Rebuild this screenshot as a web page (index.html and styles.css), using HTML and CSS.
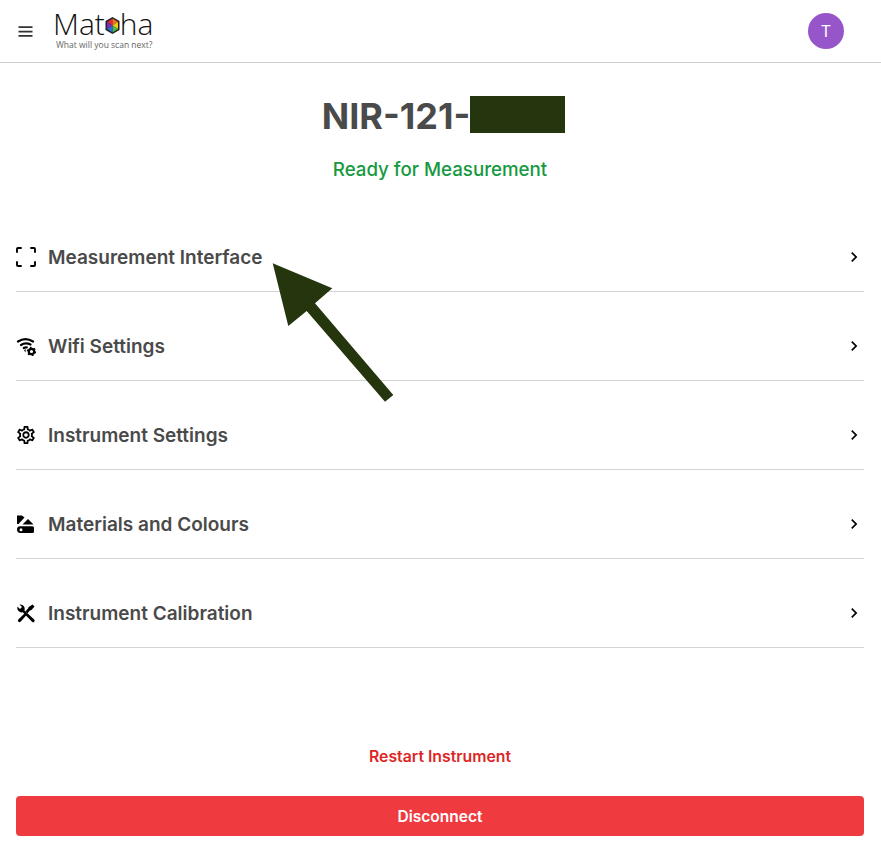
FILE: index.html
```html
<!DOCTYPE html>
<html lang="en">
<head>
  <meta charset="UTF-8">
  <meta name="viewport" content="width=device-width, initial-scale=1.0">
  <title>Matoha Instrument</title>
  <link rel="stylesheet" href="styles.css">
</head>
<body>
  <header class="topbar">
    <div class="topbar-left">
      <button class="menu-btn" aria-label="Menu">
        <svg width="21" height="21" viewBox="0 0 24 24"><path d="M4 18h16v-2H4v2zm0-5h16v-2H4v2zm0-7v2h16V6H4z" fill="#333"/></svg>
      </button>
      <div class="logo">
        <div class="logo-word">
          <span>Mat</span>
          <svg class="logo-hex" width="15" height="17" viewBox="0 0 30 34">
            <polygon points="15,0 29,8 29,26 15,34 1,26 1,8" fill="#222"/>
            <polygon points="15,3 15,17 4,10" fill="#e0263a"/>
            <polygon points="15,3 26,10 15,17" fill="#f0701f"/>
            <polygon points="26,10 26,24 15,17" fill="#f2c818"/>
            <polygon points="26,24 15,31 15,17" fill="#4fb848"/>
            <polygon points="15,31 4,24 15,17" fill="#2a6fd0"/>
            <polygon points="4,24 4,10 15,17" fill="#7a2fb8"/>
          </svg>
          <span>ha</span>
        </div>
        <div class="logo-tag">What will you scan next?</div>
      </div>
    </div>
    <div class="avatar">T</div>
  </header>

  <main class="content">
    <h1 class="device-name">NIR-121-<span class="redacted"></span></h1>
    <p class="status">Ready for Measurement</p>

    <ul class="menu">
      <li class="menu-row">
        <svg class="row-icon" viewBox="0 0 20 20" fill="none" stroke="#000" stroke-width="1.900" stroke-linecap="round" stroke-linejoin="round">
          <path d="M1 5V2a1 1 0 0 1 1-1h3M15 1h3a1 1 0 0 1 1 1v3M19 15v3a1 1 0 0 1-1 1h-3M5 19H2a1 1 0 0 1-1-1v-3"/>
        </svg>
        <span class="row-label">Measurement Interface</span>
        <svg class="chevron" viewBox="0 0 24 24"><path d="M10 6L8.600 7.400 13.200 12l-4.600 4.600L10 18l6-6z"/></svg>
      </li>
      <li class="menu-row">
        <svg class="row-icon" viewBox="0 0 20 20">
          <g fill="none" stroke="#000" stroke-width="2.200" stroke-linecap="round">
            <path d="M2 5.500Q9.500 .8 17 5.500"/>
            <path d="M5 9Q9.500 6 14.500 8.500"/>
            <path d="M7.800 12Q9.300 11.100 10.800 11.400"/>
          </g>
          <path d="M9.600 13L8 14.600l1.600 1.600z"/>
          <circle cx="15.500" cy="15.500" r="2.700" fill="none" stroke="#000" stroke-width="2.200"/>
          <circle cx="15.500" cy="15.500" r="4" fill="none" stroke="#000" stroke-width="1.500" stroke-dasharray="1.700 2.490"/>
        </svg>
        <span class="row-label">Wifi Settings</span>
        <svg class="chevron" viewBox="0 0 24 24"><path d="M10 6L8.600 7.400 13.200 12l-4.600 4.600L10 18l6-6z"/></svg>
      </li>
      <li class="menu-row">
        <svg class="row-icon" viewBox="1 1 22 22"><path d="M19.430 12.980c.04-.32.07-.64.07-.98 0-.34-.03-.66-.07-.98l2.110-1.650c.19-.15.24-.42.120-.64l-2-3.460c-.09-.16-.26-.25-.44-.25-.06 0-.12.01-.17.03l-2.490 1c-.52-.4-1.080-.73-1.690-.98l-.38-2.650C14.460 2.180 14.250 2 14 2h-4c-.25 0-.46.18-.49.42l-.38 2.650c-.61.25-1.170.59-1.690.98l-2.490-1c-.06-.02-.12-.03-.18-.03-.17 0-.34.09-.43.25l-2 3.460c-.13.22-.07.49.12.64l2.110 1.650c-.04.32-.07.65-.07.98 0 .33.03.66.07.98l-2.110 1.650c-.19.15-.24.42-.12.64l2 3.460c.09.16.26.25.44.25.06 0 .12-.01.17-.03l2.490-1c.52.4 1.080.73 1.690.98l.38 2.650c.03.24.24.42.49.42h4c.25 0 .46-.18.49-.42l.38-2.650c.61-.25 1.170-.59 1.690-.98l2.490 1c.06.02.12.03.18.03.17 0 .34-.09.43-.25l2-3.460c.12-.22.07-.49-.12-.64l-2.110-1.650zm-1.980-1.710c.04.31.05.52.05.73 0 .21-.02.43-.05.73l-.14 1.130.89.700 1.080.840-.7 1.210-1.270-.51-1.040-.42-.9.680c-.43.32-.84.56-1.250.730l-1.060.43-.16 1.130-.2 1.350h-1.400l-.19-1.350-.16-1.130-1.060-.43c-.43-.18-.83-.41-1.230-.71l-.91-.7-1.060.43-1.270.51-.7-1.210 1.080-.84.890-.7-.14-1.130c-.03-.31-.05-.54-.05-.74s.02-.43.05-.73l.14-1.130-.89-.7-1.080-.84.7-1.210 1.270.51 1.040.42.9-.68c.43-.32.84-.56 1.250-.73l1.060-.43.16-1.130.2-1.350h1.390l.19 1.350.16 1.130 1.060.43c.43.18.83.41 1.230.71l.91.7 1.060-.43 1.270-.51.7 1.210-1.070.85-.89.7.14 1.130zM12 8c-2.210 0-4 1.790-4 4s1.790 4 4 4 4-1.790 4-4-1.790-4-4-4zm0 6c-1.100 0-2-.9-2-2s.9-2 2-2 2 .9 2 2-.9 2-2 2z"/></svg>
        <span class="row-label">Instrument Settings</span>
        <svg class="chevron" viewBox="0 0 24 24"><path d="M10 6L8.600 7.400 13.200 12l-4.600 4.600L10 18l6-6z"/></svg>
      </li>
      <li class="menu-row">
        <svg class="row-icon" viewBox="0 0 20 20">
          <path d="M1 1.500h5l2.500 2L2.500 10H1z"/>
          <path d="M12 5l5.500 5.500H6.500z"/>
          <path fill-rule="evenodd" d="M4.500 12.200h12a1.500 1.500 0 0 1 1.500 1.500v3.800a1.500 1.500 0 0 1-1.500 1.500h-12A3.400 3.400 0 0 1 1 15.600a3.400 3.400 0 0 1 3.500-3.400zM5 14.200a1.500 1.500 0 1 0 0 3 1.500 1.500 0 0 0 0-3z"/>
        </svg>
        <span class="row-label">Materials and Colours</span>
        <svg class="chevron" viewBox="0 0 24 24"><path d="M10 6L8.600 7.400 13.200 12l-4.600 4.600L10 18l6-6z"/></svg>
      </li>
      <li class="menu-row">
        <svg class="row-icon" viewBox="0 0 20 20">
          <path d="M1.500 3.500L4 6l2-2-2.500-2.500A4.500 4.500 0 0 1 8.500 7.500L18.200 16.500a1.500 1.500 0 0 1-2.200 2.200L6.800 9.300A4.500 4.500 0 0 1 1.500 3.500z"/>
          <path d="M16.500 1.500l2 2-3 3.500-1.500.5-2.500 2.700L9.500 8.200 12 5.500l.7-1.500zM8.500 10.500l1.800 1.700-5.500 6.300a1.500 1.500 0 0 1-2.500-2.100z"/>
        </svg>
        <span class="row-label">Instrument Calibration</span>
        <svg class="chevron" viewBox="0 0 24 24"><path d="M10 6L8.600 7.400 13.200 12l-4.600 4.600L10 18l6-6z"/></svg>
      </li>
    </ul>

    <a class="restart-link" href="#">Restart Instrument</a>
    <button class="disconnect-btn">Disconnect</button>
  </main>

  <!-- annotation drawn on top of the screenshot -->
  <svg class="arrow" width="881" height="848" viewBox="0 0 881 848">
    <polygon points="272.700,263.300 332.300,288.300 315,303.300 393.300,395 385,401.700 306.700,311 288.300,326" fill="#25360f"/>
  </svg>
</body>
</html>
```

FILE: styles.css
```css
* {
  box-sizing: border-box;
}
body {
  font-family: Inter, "Liberation Sans", sans-serif;
  background-color: #fff;
  color: #4a4a4a;
  margin: 0;
  padding: 0;
  height: 848px;
  overflow: hidden;
}
.topbar {
  height: 63px;
  display: flex;
  justify-content: space-between;
  align-items: center;
  padding: 0 37px 0 15px;
  border-bottom: 1px solid #cfcfcf;
}
.topbar-left {
  display: flex;
  align-items: center;
  gap: 17px;
}
.menu-btn {
  border: none;
  background: none;
  padding: 0;
  width: 21px;
  height: 21px;
}
.logo {
  display: flex;
  flex-direction: column;
  margin-top: -3px;
}
.logo-word {
  display: flex;
  align-items: center;
  font-family: "Open Sans", sans-serif;
  font-weight: 300;
  font-size: 30px;
  line-height: 29px;
  color: #111;
}
.logo-hex {
  margin: 3px 0 0 0;
}
.logo-tag {
  font-family: "Open Sans", sans-serif;
  font-size: 8.500px;
  line-height: 11px;
  color: #666;
  margin: 1px 0 0 3px;
}
.avatar {
  width: 36px;
  height: 36px;
  border-radius: 50%;
  background-color: #9655c8;
  color: #fff;
  font-size: 16px;
  display: flex;
  align-items: center;
  justify-content: center;
}
.content {
  padding: 0 17px 0 16px;
  display: flex;
  flex-direction: column;
}
.device-name {
  margin: 33px 0 0;
  padding-left: 7px;
  font-size: 36px;
  line-height: 40px;
  font-weight: 700;
  text-align: center;
  color: #4a4a4a;
}
.redacted {
  display: inline-block;
  width: 95px;
  height: 37px;
  vertical-align: -4px;
  background-color: #25360f;
}
.status {
  margin: 20px 0 0;
  font-size: 18.720px;
  line-height: 28px;
  font-weight: 500;
  text-align: center;
  color: #16993f;
}
.menu {
  list-style: none;
  margin: 19px 0 0;
  padding: 0;
}
.menu-row {
  height: 89px;
  display: flex;
  align-items: center;
  gap: 12px;
  border-bottom: 1px solid #d4d4d4;
  padding-top: 20px;
  font-size: 19px;
  font-weight: 600;
}
.row-icon {
  width: 20px;
  height: 20px;
  flex-shrink: 0;
}
.row-label {
  flex: 1;
}
.chevron {
  width: 20px;
  height: 20px;
}
.restart-link {
  margin-top: 97px;
  text-align: center;
  font-size: 15.800px;
  line-height: 24px;
  font-weight: 600;
  color: #dc2626;
  text-decoration: none;
}
.disconnect-btn {
  margin-top: 27px;
  height: 40px;
  border: none;
  border-radius: 4px;
  background-color: #ef3b40;
  color: #fff;
  font-family: inherit;
  font-size: 15.500px;
  font-weight: 600;
}
.arrow {
  position: absolute;
  left: 0;
  top: 0;
  pointer-events: none;
}
```
